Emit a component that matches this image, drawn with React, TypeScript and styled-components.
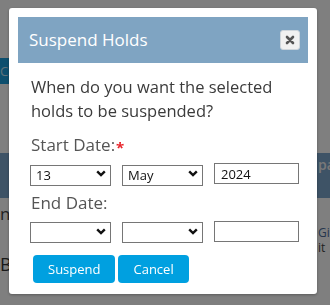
import React from "react";
import styled, { createGlobalStyle } from "styled-components";

const GlobalStyle = createGlobalStyle`
  html, body {
    margin: 0;
    padding: 0;
    width: 330px;
    height: 305px;
    overflow: hidden;
    background: #fff;
  }
  body {
    font-family: "Open Sans", "Noto Sans", sans-serif;
  }
`;

export default function App() {
  return (
    <>
      <GlobalStyle />
      <Page>
        <ActionRow>
          <PageButton>Cancel</PageButton>
        </ActionRow>
        <Band>
          <BandText>paused</BandText>
        </Band>
        <PageRow>
          <PageHeading>ng</PageHeading>
          <SideNote>
            <SideLink>Gill</SideLink>
            <span>it</span>
          </SideNote>
        </PageRow>
        <BigLetter>B</BigLetter>
        <BottomLine>holds to the side</BottomLine>
      </Page>
      <Overlay />
      <Dialog role="dialog" aria-labelledby="suspend-title">
        <Header>
          <Title id="suspend-title">Suspend Holds</Title>
          <CloseButton aria-label="Close">
            <svg width="10" height="10" viewBox="0 0 10 10" aria-hidden="true">
              <path d="M2 2 L8 8 M8 2 L2 8" stroke="#555" strokeWidth="2.6" strokeLinecap="round" />
            </svg>
          </CloseButton>
        </Header>
        <Body>
          <Question>When do you want the selected holds to be suspended?</Question>
          <Label>
            Start Date:<Required>*</Required>
          </Label>
          <DateRow>
            <SelectWrap>
              <Select defaultValue="13">
                <option value="13">13</option>
              </Select>
              <Chevron />
            </SelectWrap>
            <SelectWrap>
              <Select defaultValue="May">
                <option value="May">May</option>
              </Select>
              <Chevron />
            </SelectWrap>
            <YearInput defaultValue="2024" />
          </DateRow>
          <Label>End Date:</Label>
          <DateRow>
            <SelectWrap>
              <Select defaultValue="">
                <option value=""></option>
              </Select>
              <Chevron />
            </SelectWrap>
            <SelectWrap>
              <Select defaultValue="">
                <option value=""></option>
              </Select>
              <Chevron />
            </SelectWrap>
            <YearInput defaultValue="" />
          </DateRow>
          <Buttons>
            <PrimaryButton>Suspend</PrimaryButton>
            <PrimaryButton>Cancel</PrimaryButton>
          </Buttons>
        </Body>
      </Dialog>
    </>
  );
}

function Chevron() {
  return (
    <ChevronIcon width="10" height="7" viewBox="0 0 10 7" aria-hidden="true">
      <path d="M1.2 1.3 L5 5 L8.8 1.3" fill="none" stroke="#111" strokeWidth="2.4" />
    </ChevronIcon>
  );
}

/* page behind the modal */

const Page = styled.div`
  width: 330px;
  height: 305px;
  padding-top: 58px;
  box-sizing: border-box;
  color: #333;
  overflow: hidden;
`;

const ActionRow = styled.div`
  display: flex;
  height: 26px;
`;

const PageButton = styled.div`
  background: #1b9fdc;
  color: #bfe4f5;
  font-size: 13px;
  line-height: 26px;
  padding: 0 12px 0 0;
`;

const Band = styled.div`
  margin-top: 69px;
  height: 45px;
  box-sizing: border-box;
  background: #7ca6cc;
  display: flex;
  align-items: flex-start;
  padding: 2px 0 0 318px;
  overflow: hidden;
`;

const BandText = styled.span`
  color: #f2f2f2;
  font-size: 14px;
  line-height: 20px;
  font-weight: 600;
  white-space: nowrap;
`;

const PageRow = styled.div`
  display: flex;
  justify-content: space-between;
  align-items: flex-start;
  height: 54px;
  padding-top: 4px;
  box-sizing: border-box;
  overflow: hidden;
`;

const PageHeading = styled.div`
  font-size: 17px;
  line-height: 24px;
  color: #444;
`;

const SideNote = styled.div`
  display: flex;
  flex-direction: column;
  width: 12px;
  overflow: hidden;
  font-size: 12px;
  line-height: 15px;
  margin-top: 23px;
  color: #444;
  white-space: nowrap;
`;

const SideLink = styled.span`
  color: #4d6d9a;
`;

const BigLetter = styled.div`
  font-size: 18px;
  line-height: 24px;
  color: #333;
`;

const BottomLine = styled.div`
  font-size: 17px;
  line-height: 24px;
  padding-left: 64px;
  margin-top: 23px;
  color: #333;
`;

const Overlay = styled.div`
  position: fixed;
  inset: 0;
  background: rgba(0, 0, 0, 0.5);
`;

/* modal */

const Dialog = styled.div`
  position: fixed;
  left: 9px;
  top: 8px;
  width: 308px;
  box-sizing: border-box;
  background: #fff;
  border-radius: 3px;
  padding: 9px 9px 11px;
  box-shadow: 0 1px 3px rgba(0, 0, 0, 0.3);
`;

const Header = styled.div`
  height: 46px;
  background: #7fa4c2;
  display: flex;
  align-items: center;
  justify-content: space-between;
  padding: 0 8px 0 11px;
`;

const Title = styled.h2`
  margin: 0;
  color: #fff;
  font-size: 17px;
  font-weight: 400;
  line-height: 24px;
`;

const CloseButton = styled.button`
  width: 20px;
  height: 20px;
  padding: 0;
  display: flex;
  align-items: center;
  justify-content: center;
  background: #f1f1f1;
  border: 1px solid #cfd6dc;
  border-radius: 3px;
  cursor: pointer;
`;

const Body = styled.div`
  padding: 12px 0 0 12px;
  color: #444;
`;

const Question = styled.p`
  margin: 0 0 10px 1px;
  font-size: 16.5px;
  line-height: 24px;
  color: #3b3b3b;
`;

const Label = styled.div`
  font-size: 17px;
  line-height: 24px;
  color: #555;
  margin-left: 1px;
`;

const Required = styled.span`
  color: #e8232a;
  font-size: 15px;
  font-weight: 700;
  margin-left: 1px;
  position: relative;
  top: 2px;
`;

const DateRow = styled.div`
  display: flex;
  gap: 11px;
  margin: 6px 0 5px;
`;

const SelectWrap = styled.div`
  position: relative;
  width: 81px;
`;

const Select = styled.select`
  appearance: none;
  width: 100%;
  height: 21px;
  box-sizing: border-box;
  border: 1px solid #767676;
  border-radius: 0;
  background: #fff;
  font-family: "Open Sans", sans-serif;
  font-size: 13px;
  color: #111;
  padding: 0 0 0 5px;
  margin: 0;
`;

const ChevronIcon = styled.svg`
  position: absolute;
  right: 5px;
  top: 7px;
  pointer-events: none;
`;

const YearInput = styled.input`
  width: 85px;
  height: 21px;
  box-sizing: border-box;
  border: 1px solid #767676;
  border-radius: 0;
  font-family: "Open Sans", sans-serif;
  font-size: 13px;
  color: #111;
  padding: 0 0 0 6px;
  margin: 0;
`;

const Buttons = styled.div`
  display: flex;
  gap: 3px;
  margin: 12px 0 0 3px;
`;

const PrimaryButton = styled.button`
  height: 28px;
  padding: 0 15px;
  background: #00a0e0;
  color: #fff;
  border: none;
  border-radius: 4px;
  font-family: "Open Sans", sans-serif;
  font-size: 13px;
  cursor: pointer;
`;
